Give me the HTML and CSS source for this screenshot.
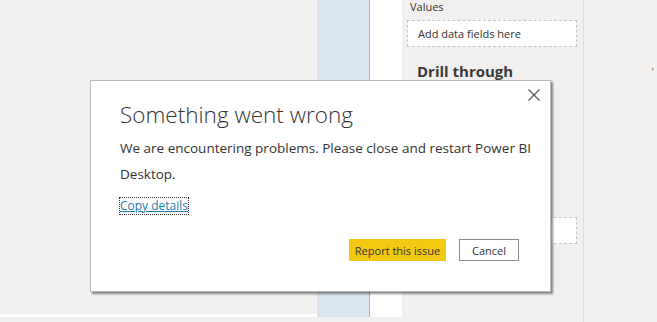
FILE: index.html
```html
<!DOCTYPE html>
<html lang="en">
  <head>
    <meta charset="UTF-8" />
    <title>Something went wrong</title>
    <link rel="stylesheet" href="styles.css">
  </head>
  <body>
    <div class="app">
      <div class="columns">
        <div class="canvasArea">
          <div class="canvasFill"></div>
          <div class="canvasEdge"></div>
        </div>
        <div class="filterStrip"></div>
        <div class="whiteStrip"></div>
        <div class="fieldsPanel">
          <p class="wellLabel">Values</p>
          <div class="dropWell">Add data fields here</div>
          <h2 class="panelHeading">Drill through</h2>
          <div class="dropWell lowerWell">Add data fields here</div>
        </div>
        <div class="rightArea"><span class="tick">'</span></div>
      </div>
    </div>

    <div class="dialog">
      <button class="closeBtn" aria-label="Close">
        <svg width="12" height="12" viewBox="0 0 12 12">
          <path d="M0.5 0.5 L11.5 11.5 M11.5 0.5 L0.5 11.5" stroke="#555" stroke-width="1.2" fill="none" />
        </svg>
      </button>
      <h1 class="dialogTitle">Something went wrong</h1>
      <p class="dialogText">We are encountering problems. Please close and restart Power BI Desktop.</p>
      <a class="copyLink" href="#">Copy details</a>
      <div class="dialogButtons">
        <button class="reportBtn">Report this issue</button>
        <button class="cancelBtn">Cancel</button>
      </div>
    </div>
  </body>
</html>
```

FILE: styles.css
```css
body {
  margin: 0;
  width: 657px;
  height: 322px;
  overflow: hidden;
  background-color: #f0f0f0;
  font-family: "Open Sans", "Liberation Sans", sans-serif;
  color: #333;
}

.app {
  height: 322px;
}

.columns {
  display: flex;
  height: 317px;
}

.canvasArea {
  width: 317px;
  display: flex;
  flex-direction: column;
}

.canvasFill {
  flex: 1;
  background-color: #f0f0f0;
}

.canvasEdge {
  height: 3px;
  background-color: #ffffff;
}

.filterStrip {
  width: 52px;
  background-color: #d8e4f0;
  border-right: 1px solid #a9b6c4;
}

.whiteStrip {
  width: 32px;
  background-color: #ffffff;
}

.fieldsPanel {
  width: 170px;
  padding: 0 6px 0 5px;
  border-right: 1px solid #dcdcdc;
  background-color: #f1f0ef;
  height: 322px;
}

.wellLabel {
  margin: 0;
  padding: 0 0 0 3px;
  font-size: 11px;
  line-height: 14px;
  color: #333;
}

.dropWell {
  margin-top: 6px;
  height: 25px;
  border: 1px dashed #c4c4c4;
  background-color: #ffffff;
  font-size: 11px;
  line-height: 25px;
  padding-left: 10px;
  color: #333;
}

.panelHeading {
  margin: 14px 0 0 10px;
  font-size: 15px;
  font-weight: 700;
  color: #3a3a3a;
}

.lowerWell {
  margin-top: 136px;
}

.rightArea {
  flex: 1;
  background-color: #f1f0ef;
  position: relative;
}

.tick {
  position: absolute;
  top: 64px;
  right: 3px;
  font-size: 11px;
  color: #666;
}

.dialog {
  position: absolute;
  left: 90px;
  top: 80px;
  width: 461px;
  height: 212px;
  background-color: #ffffff;
  border: 1px solid #b9b9b9;
  box-shadow: 2px 2px 2px rgba(0, 0, 0, 0.45);
  padding: 0 0 0 29px;
  box-sizing: border-box;
}

.closeBtn {
  position: absolute;
  top: 8px;
  right: 10px;
  padding: 0;
  border: none;
  background: none;
  width: 12px;
  height: 12px;
}

.dialogTitle {
  margin: 18px 0 0 0;
  font-size: 22.5px;
  font-weight: 300;
  color: #333;
  line-height: 32px;
}

.dialogText {
  margin: 4px 0 0 0;
  width: 420px;
  font-size: 13.5px;
  line-height: 26px;
  color: #333;
}

.copyLink {
  display: inline-block;
  margin-top: 11px;
  font-size: 12px;
  line-height: 16px;
  color: #1c7cae;
  outline: 1px dotted #333;
}

.dialogButtons {
  display: flex;
  justify-content: flex-end;
  gap: 13px;
  margin: 24px 31px 0 0;
}

.reportBtn,
.cancelBtn {
  height: 22px;
  font-family: "Open Sans", "Liberation Sans", sans-serif;
  font-size: 11px;
  color: #333;
  padding: 0;
}

.reportBtn {
  width: 97px;
  background-color: #f2c811;
  border: none;
}

.cancelBtn {
  width: 60px;
  background-color: #ffffff;
  border: 1px solid #8a8a8a;
}
```
